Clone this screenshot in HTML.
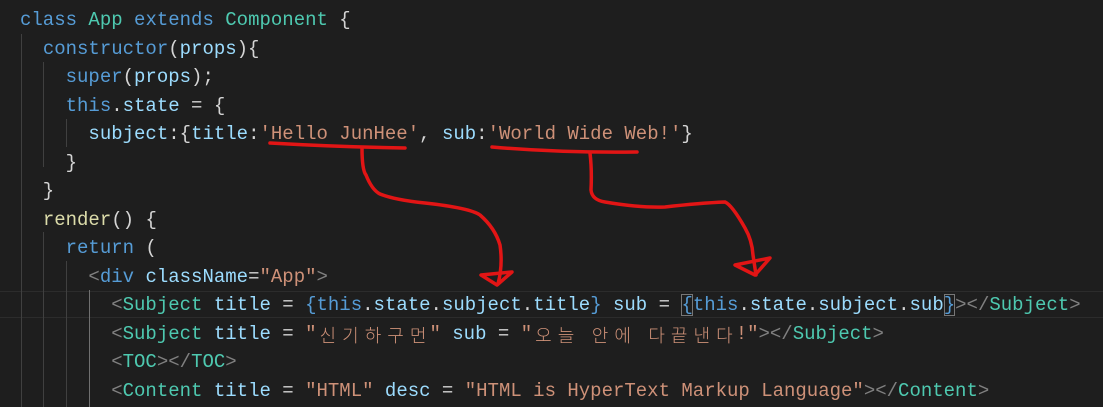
<!DOCTYPE html>
<html><head><meta charset="utf-8"><style>
html,body{margin:0;padding:0;background:#1e1e1e;width:1103px;height:407px;overflow:hidden}
pre{margin:0;position:absolute;left:20px;top:6px;font-family:"Liberation Mono",monospace;font-size:19px;line-height:28.5px;color:#d4d4d4;white-space:pre}
.hl{position:absolute;left:0;top:291px;width:1103px;height:25px;border-top:1px solid #2c2c2c;border-bottom:1px solid #2c2c2c}
.g{position:absolute;width:1px;background:#404040}
.kw{color:#569cd6}.cl{color:#4ec9b0}.fn{color:#dcdcaa}.v{color:#9cdcfe}.s{color:#ce9178}.t{color:#808080}.p{color:#d4d4d4}
.k{display:inline-block;width:22.6px;height:20px;line-height:20px;vertical-align:-3px;text-align:center;font-family:"Noto Sans CJK KR",sans-serif;font-weight:300;font-size:18px;color:#ce9178}
.b{outline:1px solid #777;outline-offset:-1px}
svg{position:absolute;left:0;top:0}
</style></head><body>
<div class="hl"></div>
<div class="g" style="left:21px;top:34px;height:373px"></div>
<div class="g" style="left:43px;top:62px;height:105px"></div>
<div class="g" style="left:66px;top:119px;height:28px"></div>
<div class="g" style="left:43px;top:232px;height:175px"></div>
<div class="g" style="left:66px;top:261px;height:146px"></div>
<div class="g" style="left:89px;top:290px;height:117px;background:#707070"></div>
<pre><span class="kw">class</span> <span class="cl">App</span> <span class="kw">extends</span> <span class="cl">Component</span> {
  <span class="kw">constructor</span>(<span class="v">props</span>){
    <span class="kw">super</span>(<span class="v">props</span>);
    <span class="kw">this</span>.<span class="v">state</span> = {
      <span class="v">subject</span>:{<span class="v">title</span>:<span class="s">'Hello JunHee'</span>, <span class="v">sub</span>:<span class="s">'World Wide Web!'</span>}
    }
  }
  <span class="fn">render</span>() {
    <span class="kw">return</span> (
      <span class="t">&lt;</span><span class="kw">div</span> <span class="v">className</span>=<span class="s">"App"</span><span class="t">&gt;</span>
        <span class="t">&lt;</span><span class="cl">Subject</span> <span class="v">title</span> = <span class="kw">{</span><span class="kw">this</span>.<span class="v">state</span>.<span class="v">subject</span>.<span class="v">title</span><span class="kw">}</span> <span class="v">sub</span> = <span class="kw b">{</span><span class="kw">this</span>.<span class="v">state</span>.<span class="v">subject</span>.<span class="v">sub</span><span class="kw b">}</span><span class="t">&gt;&lt;/</span><span class="cl">Subject</span><span class="t">&gt;</span>
        <span class="t">&lt;</span><span class="cl">Subject</span> <span class="v">title</span> = <span class="s">"</span><span class="k">신</span><span class="k">기</span><span class="k">하</span><span class="k">구</span><span class="k">먼</span><span class="s">"</span> <span class="v">sub</span> = <span class="s">"</span><span class="k">오</span><span class="k">늘</span><span class="s"> </span><span class="k">안</span><span class="k">에</span><span class="s"> </span><span class="k">다</span><span class="k">끝</span><span class="k">낸</span><span class="k">다</span><span class="s">!"</span><span class="t">&gt;&lt;/</span><span class="cl">Subject</span><span class="t">&gt;</span>
        <span class="t">&lt;</span><span class="cl">TOC</span><span class="t">&gt;&lt;/</span><span class="cl">TOC</span><span class="t">&gt;</span>
        <span class="t">&lt;</span><span class="cl">Content</span> <span class="v">title</span> = <span class="s">"HTML"</span> <span class="v">desc</span> = <span class="s">"HTML is HyperText Markup Language"</span><span class="t">&gt;&lt;/</span><span class="cl">Content</span><span class="t">&gt;</span></pre>
<svg width="1103" height="407" fill="none" stroke="#e21515" stroke-width="3.5" stroke-linecap="round" stroke-linejoin="round">
<path d="M270 143 Q340 147 405 148"/>
<path d="M362 148 Q362 170 366 175 Q372 190 380 194 Q395 200 425 203 Q470 208 480 215 Q495 228 500 245 Q503 265 498 284"/>
<path d="M481 275 L512 272 L497 285 Z"/>
<path d="M492 147 Q560 153 637 152"/>
<path d="M590 153 Q592 170 591 190 Q592 200 605 202 Q640 208 665 207 Q700 203 725 202 Q732 205 745 228 Q752 240 753 255 L756 275"/>
<path d="M735 265 L770 258 L755 275 Z"/>
</svg>
</body></html>
